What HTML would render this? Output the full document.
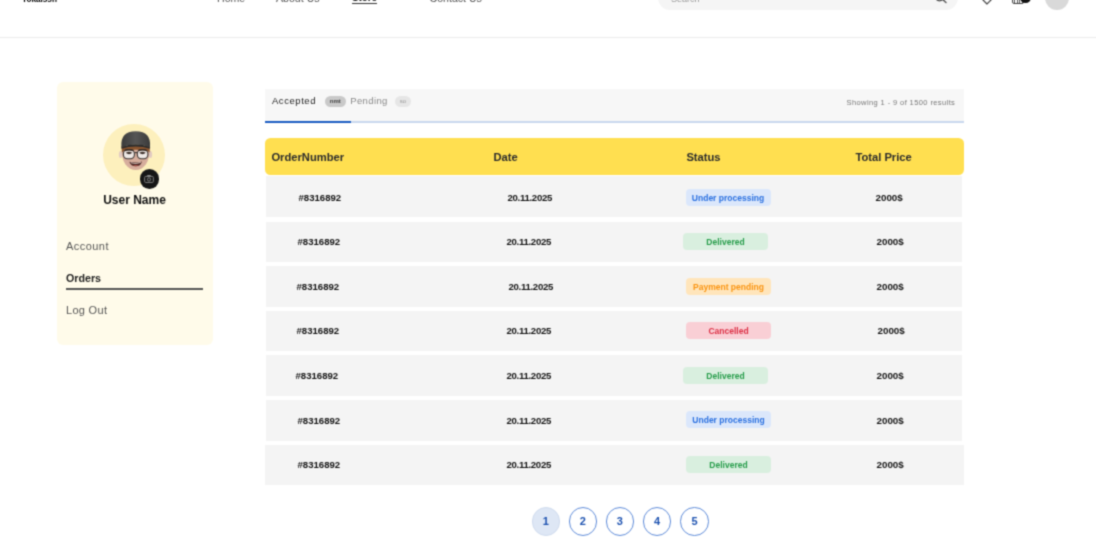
<!DOCTYPE html>
<html><head><meta charset="utf-8">
<style>
*{margin:0;padding:0;box-sizing:border-box}
html,body{width:1096px;height:547px;overflow:hidden;background:#fff;font-family:"Liberation Sans",sans-serif;}
.abs{position:absolute}
#hdr{position:absolute;left:0;top:0;width:1096px;height:38px;border-bottom:1px solid #ebebeb}
.nav{position:absolute;top:-7.800px;font-size:10.600px;color:#555;white-space:nowrap;line-height:12px}
#side{position:absolute;left:57.300px;top:81.700px;width:155.300px;height:263.300px;background:#fffbea;border-radius:6px}
.sl{position:absolute;left:66px;font-size:11px;letter-spacing:.45px;color:#555;line-height:12px;white-space:nowrap}
#tabs{position:absolute;left:265.200px;top:88.500px;width:698.600px;height:34.800px;background:#f7f7f7}
#th{position:absolute;left:265.400px;top:138.400px;width:698.500px;height:37.100px;background:#ffdf50;border-radius:5.500px}
#th span{position:absolute;top:12px;font-size:11.200px;font-weight:bold;color:#2b2b2b;line-height:14px;white-space:nowrap}
.row{position:absolute;left:265.500px;width:696.600px;height:40.300px;background:#f4f4f4}
.row span{position:absolute;font-size:9.600px;font-weight:bold;color:#111;line-height:10px;white-space:nowrap;top:15.600px}
.row span.d{letter-spacing:-.3px}
.row span.p{font-size:9.800px}
.pill{position:absolute;margin-top:-.2px;height:16.800px;border-radius:4px;font-size:8.500px;font-weight:bold;line-height:18.200px;text-align:center;white-space:nowrap;top:12.300px}
.b{background:#dbe7fb;color:#2a70e0}
.g{background:#d9efdf;color:#259c49}
.o{background:#ffe5bb;color:#fa9410}
.r{background:#f9cfd5;color:#dc3045}
.pg{position:absolute;top:507.200px;width:28.400px;height:28.400px;border-radius:50%;border:1px solid #5f8cd9;color:#1d52b0;font-size:11px;font-weight:bold;text-align:center;line-height:27.200px}
</style></head><body>
<svg width="0" height="0" style="position:absolute"><defs><filter id="gb" x="0" y="0" width="100%" height="100%" color-interpolation-filters="sRGB"><feConvolveMatrix order="3" kernelMatrix="0.0361 0.1178 0.0361 0.1178 0.3846 0.1178 0.0361 0.1178 0.0361" divisor="1" edgeMode="duplicate" preserveAlpha="true"/></filter></defs></svg>
<div id="wrap" style="position:absolute;left:0;top:0;width:1096px;height:547px;overflow:hidden;background:#fff;filter:url(#gb)">
<div id="hdr">
 <div class="nav" style="left:22px;font-weight:bold;color:#111;font-size:8.200px;top:-6.300px;color:#000">Tokaissn</div>
 <div class="nav" style="left:217px">Home</div>
 <div class="nav" style="left:276px">About Us</div>
 <div class="nav" style="left:352px;font-weight:bold;color:#222;font-size:9.800px">Store</div><div class="abs" style="left:352px;top:3.300px;width:25px;height:1.200px;background:#333"></div>
 <div class="nav" style="left:429.500px">Contact Us</div>
 <div class="abs" style="left:658.200px;top:-15.600px;width:299.600px;height:26px;border-radius:12px;background:#f5f5f5"></div>
 <div class="nav" style="left:671px;color:#999;font-size:9px;top:-7.200px">Search</div>
 <svg class="abs" style="left:930px;top:-10px" width="20" height="16" viewBox="930 -10 20 16"><circle cx="939.500" cy="-3.600" r="4.400" fill="none" stroke="#555" stroke-width="1.300"/><path d="M942.600 -0.500L946 2.600" stroke="#555" stroke-width="1.400" stroke-linecap="round"/></svg>
 <svg class="abs" style="left:980px;top:-9px" width="14" height="14" viewBox="0 0 14 14"><path d="M7 13L1.5 7.5A3 3 0 0 1 7 3.5A3 3 0 0 1 12.5 7.5Z" fill="none" stroke="#444" stroke-width="1.2"/></svg>
 <div class="abs" style="left:1011.500px;top:-6px;width:12.500px;height:10.300px;border:1px solid #444;border-bottom-width:1.500px;border-radius:2px;background:repeating-linear-gradient(90deg,#fff 0 1.500px,#555 1.500px 2.500px)"></div>
 <div class="abs" style="left:1020.300px;top:-8px;width:10.600px;height:10.600px;border-radius:50%;background:#111"></div>
 <div class="abs" style="left:1045.200px;top:-13.800px;width:24px;height:24px;border-radius:50%;background:#d9d9d9"></div>
</div>

<div id="side"></div>
<div class="abs" style="left:103px;top:124px;width:62px;height:62px;border-radius:50%;background:#fdf0bd"></div>
<svg class="abs" style="left:103px;top:124px;filter:blur(.4px)" width="62" height="62" viewBox="103 124 62 62">
 <defs><linearGradient id="cg" x1="0" y1="0" x2="1" y2="0"><stop offset="0" stop-color="#3a3a3a"/><stop offset=".5" stop-color="#555"/><stop offset="1" stop-color="#3a3a3a"/></linearGradient></defs>
 <ellipse cx="120.600" cy="154.500" rx="1.700" ry="3.600" fill="#e2cbc2"/><ellipse cx="150.400" cy="154.500" rx="1.700" ry="3.600" fill="#e2cbc2"/>
 <path d="M121.800 148 Q121.300 158.500 125.500 164.500 Q130 170 135.700 170 Q141.500 170 145.800 164.500 Q150 158.500 149.500 148 Z" fill="#d6ad9c"/>
 <path d="M121.600 146 L149.800 146 L149.600 152.500 Q147.500 149.800 135.700 149.800 Q124 149.800 121.900 152.500 Z" fill="#8a552f"/>
 <path d="M121.400 147.200 Q120 131.300 135.700 131.300 Q151.500 131.300 150 147.200 Q143 144.500 135.700 144.500 Q128 144.500 121.400 147.200Z" fill="url(#cg)"/>
 <path d="M121.300 147.300 Q128 144.200 135.700 144.200 Q143 144.200 150.100 147.300 L149.900 148.800 Q143 146.400 135.700 146.400 Q128 146.400 121.500 148.800Z" fill="#2c2c2c"/>
 <rect x="123.400" y="149.700" width="11" height="9" rx="4" fill="#eee8e5" stroke="#3a3532" stroke-width="1.100"/>
 <rect x="137.300" y="149.700" width="10.600" height="9" rx="4" fill="#eee8e5" stroke="#3a3532" stroke-width="1.100"/>
 <path d="M134.400 152.600 L137.300 152.600" stroke="#3a3532" stroke-width="1.100"/>
 <path d="M125.800 152.800 Q129 150.600 132.300 152.800 Q129 155.600 125.800 152.800Z" fill="#3d302a"/><path d="M139.200 152.800 Q142.500 150.600 145.800 152.800 Q142.500 155.600 139.200 152.800Z" fill="#3d302a"/><path d="M124.500 150.600 Q129 149 133.500 150.600 M138.300 150.600 Q142.600 149 147 150.600" stroke="#33261e" stroke-width="1.500" fill="none"/>
 <path d="M129.300 161.800 Q135.700 163.600 142 161.400 Q140.500 166.300 135.700 166.300 Q131 166.300 129.300 161.800Z" fill="#4a2420"/>
 <path d="M130.500 162.300 Q135.700 163.700 141 162 L140.500 163 Q135.700 164.200 131 163.200Z" fill="#e9dfd8"/>
 <path d="M132.500 165.500 Q135.700 164.500 139 165.500 Q137.500 166.300 135.700 166.300 Q134 166.300 132.500 165.500Z" fill="#b0564f"/>
</svg>
<div class="abs" style="left:139.700px;top:169.200px;width:19.400px;height:19.400px;border-radius:50%;background:#161616"></div>
<svg class="abs" style="left:144.400px;top:174.800px" width="10" height="8" viewBox="0 0 11 9"><rect x=".6" y="1.6" width="9.800" height="6.800" rx="1.200" fill="none" stroke="#8a8a8a" stroke-width="1"/><circle cx="5.500" cy="5" r="1.800" fill="none" stroke="#8a8a8a" stroke-width="1"/><rect x="3.500" y="0" width="4" height="1.600" fill="#8a8a8a"/></svg>
<div class="abs" style="left:57px;width:155px;top:192.500px;text-align:center;font-size:12px;font-weight:bold;color:#111;line-height:15px">User Name</div>
<div class="sl" style="top:240px">Account</div>
<div class="sl" style="top:272px;font-weight:bold;color:#222;letter-spacing:0;font-size:10.700px">Orders</div>
<div class="abs" style="left:66px;top:288px;width:137px;height:2px;background:#555"></div>
<div class="sl" style="top:304px;letter-spacing:.3px">Log Out</div>

<div id="tabs">
 <div class="abs" style="left:6.800px;top:6.900px;font-size:9.500px;letter-spacing:.55px;color:#222;line-height:11px">Accepted</div>
 <div class="abs" style="left:59.800px;top:7.100px;width:20.700px;height:11px;border-radius:5.500px;background:#c9c9c9;font-size:6px;line-height:11px;text-align:center;color:#444;font-weight:bold">nmt</div>
 <div class="abs" style="left:85px;top:6.900px;font-size:9.500px;letter-spacing:.38px;color:#888;line-height:11px">Pending</div>
 <div class="abs" style="left:129.400px;top:7.100px;width:16.800px;height:11px;border-radius:5.500px;background:#e6e6e6;font-size:6px;line-height:11px;text-align:center;color:#999">so</div>
 <div class="abs" style="right:8.500px;top:9.300px;font-size:7.500px;letter-spacing:.4px;color:#777;line-height:10px">Showing 1 - 9 of 1500 results</div>
 <div class="abs" style="left:0;bottom:0;width:100%;height:2px;background:#c9d8ee"></div>
 <div class="abs" style="left:0;bottom:0;width:86px;height:2px;background:#1a5cc2"></div>
</div>

<div id="th"><span style="left:6px">OrderNumber</span><span style="left:228px">Date</span><span style="left:421px">Status</span><span style="left:590px">Total Price</span></div>

<div class="row" style="top:175.50px;height:41.95px"><span style="top:17.27px;left:33px">#8316892</span><span class="d" style="top:17.27px;left:242px">20.11.2025</span><div class="pill b" style="top:13.40px;left:420.0px;width:85px">Under processing</div><span class="p" style="top:17.27px;left:610px">2000$</span></div>
<div class="row" style="top:221.75px;height:40.40px"><span style="top:15.57px;left:32px">#8316892</span><span class="d" style="top:15.57px;left:241px">20.11.2025</span><div class="pill g" style="top:11.70px;left:417.5px;width:85px">Delivered</div><span class="p" style="top:15.57px;left:611px">2000$</span></div>
<div class="row" style="top:266.45px;height:40.20px"><span style="top:15.42px;left:31px">#8316892</span><span class="d" style="top:15.42px;left:243px">20.11.2025</span><div class="pill o" style="top:11.55px;left:420.5px;width:85px">Payment pending</div><span class="p" style="top:15.42px;left:611px">2000$</span></div>
<div class="row" style="top:310.95px;height:40.10px"><span style="top:15.47px;left:31px">#8316892</span><span class="d" style="top:15.47px;left:241px">20.11.2025</span><div class="pill r" style="top:11.60px;left:420.5px;width:85px">Cancelled</div><span class="p" style="top:15.47px;left:612px">2000$</span></div>
<div class="row" style="top:355.35px;height:40.60px"><span style="top:15.62px;left:30px">#8316892</span><span class="d" style="top:15.62px;left:241px">20.11.2025</span><div class="pill g" style="top:11.75px;left:417.5px;width:85px">Delivered</div><span class="p" style="top:15.62px;left:611px">2000$</span></div>
<div class="row" style="top:400.25px;height:40.30px"><span style="top:15.27px;left:32px">#8316892</span><span class="d" style="top:15.27px;left:241px">20.11.2025</span><div class="pill b" style="top:11.40px;left:420.5px;width:85px">Under processing</div><span class="p" style="top:15.27px;left:611px">2000$</span></div>
<div class="row" style="top:444.85px;height:39.85px;left:264.600px;width:699.300px"><span style="top:15.22px;left:32.900px">#8316892</span><span class="d" style="top:15.22px;left:241.900px">20.11.2025</span><div class="pill g" style="top:11.35px;left:421.4px;width:85px">Delivered</div><span class="p" style="top:15.22px;left:611.900px">2000$</span></div>

<div class="pg" style="left:531.6px;background:#dee7f5;border-color:#cfdbee">1</div>
<div class="pg" style="left:568.6px">2</div>
<div class="pg" style="left:605.7px">3</div>
<div class="pg" style="left:642.8px">4</div>
<div class="pg" style="left:680.4px">5</div>
</div>
</body></html>
